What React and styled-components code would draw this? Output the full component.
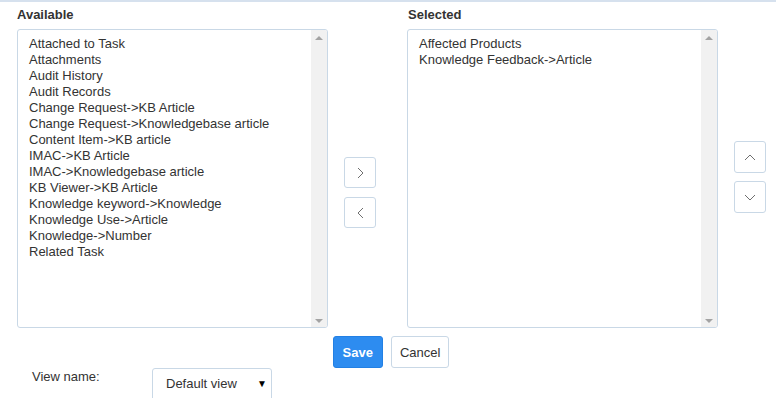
import React from 'react'
import styled, { createGlobalStyle } from 'styled-components'

const GlobalStyle = createGlobalStyle`
  html, body {
    margin: 0;
    padding: 0;
    background: #fff;
  }
  body {
    font-family: "Liberation Sans", Arial, sans-serif;
    font-size: 13px;
    color: #333;
  }
`

const Page = styled.div`
  width: 776px;
  height: 398px;
  overflow: hidden;
  border-top: 2px solid #d6e1ee;
  box-sizing: border-box;
`

const Picker = styled.div`
  display: grid;
  grid-template-columns: 311px 79px 311px 58px;
  padding: 5px 0 0 17px;
`

const Column = styled.div`
  display: flex;
  flex-direction: column;
`

const Label = styled.div`
  font-weight: bold;
  line-height: 16px;
  margin: 0 0 6px ${p => (p.inset ? 1 : 0)}px;
`

const ListBox = styled.div`
  height: 299px;
  box-sizing: border-box;
  border: 1px solid #c9d8e6;
  border-radius: 3px;
  display: flex;
  overflow: hidden;
`

const Items = styled.div`
  flex: 1;
  padding: 6px 0 0 11px;
`

const Item = styled.div`
  line-height: 16px;
  white-space: nowrap;
`

const ScrollTrack = styled.div`
  width: 16px;
  background: #f1f1f1;
  display: flex;
  flex-direction: column;
  justify-content: space-between;
  align-items: center;
  padding: 6px 0 4px;
`

const Arrow = styled.span`
  width: 0;
  height: 0;
  border-left: 4px solid transparent;
  border-right: 4px solid transparent;
  ${p => (p.down ? 'border-top: 4px solid #a3a3a3;' : 'border-bottom: 4px solid #a3a3a3;')}
`

const ButtonStack = styled.div`
  display: flex;
  flex-direction: column;
  gap: ${p => p.gap}px;
  padding: ${p => p.top}px 0 0 16px;
`

const IconButton = styled.button`
  width: 32px;
  height: ${p => p.h}px;
  box-sizing: border-box;
  padding: 0;
  background: #fff;
  border: 1px solid #c9d8e6;
  border-radius: 3px;
  display: flex;
  align-items: center;
  justify-content: center;
  svg {
    display: block;
  }
`

const Actions = styled.div`
  display: flex;
  justify-content: center;
  gap: 8px;
  padding: 8px 0 0 6px;
`

const Button = styled.button`
  height: 32px;
  box-sizing: border-box;
  padding: 0 ${p => (p.primary ? 9 : 8)}px;
  font-family: "Liberation Sans", Arial, sans-serif;
  font-size: 13px;
  font-weight: ${p => (p.primary ? 'bold' : 'normal')};
  color: ${p => (p.primary ? '#fff' : '#333')};
  background: ${p => (p.primary ? '#2d8cf0' : '#fff')};
  border: 1px solid ${p => (p.primary ? '#2280e4' : '#c9d8e6')};
  border-radius: 3px;
`

const ViewRow = styled.div`
  display: flex;
  align-items: flex-start;
  padding-left: 32px;
`

const ViewLabel = styled.div`
  width: 120px;
  line-height: 16px;
  padding-top: 1px;
`

const Select = styled.div`
  width: 120px;
  height: 34px;
  box-sizing: border-box;
  border: 1px solid #c9d8e6;
  border-radius: 3px;
  display: flex;
  justify-content: space-between;
  padding: 7px 4px 0 13px;
  line-height: 16px;
`

const Caret = styled.span`
  font-size: 10px;
  color: #000;
`

const available = [
  'Attached to Task',
  'Attachments',
  'Audit History',
  'Audit Records',
  'Change Request->KB Article',
  'Change Request->Knowledgebase article',
  'Content Item->KB article',
  'IMAC->KB Article',
  'IMAC->Knowledgebase article',
  'KB Viewer->KB Article',
  'Knowledge keyword->Knowledge',
  'Knowledge Use->Article',
  'Knowledge->Number',
  'Related Task',
]

const selected = ['Affected Products', 'Knowledge Feedback->Article']

const Chevron = ({ dir }) => {
  const pts = {
    right: '1,1 6,6 1,11',
    left: '6,1 1,6 6,11',
    up: '1,6 6,1 11,6',
    down: '1,1 6,6 11,1',
  }[dir]
  const horiz = dir === 'up' || dir === 'down'
  return (
    <svg width={horiz ? 12 : 7} height={horiz ? 7 : 12} viewBox={horiz ? '0 0 12 7' : '0 0 7 12'}>
      <polyline points={pts} fill="none" stroke="#6f6f6f" strokeWidth="1" />
    </svg>
  )
}

const List = ({ title, items, inset }) => (
  <Column>
    <Label inset={inset}>{title}</Label>
    <ListBox>
      <Items>
        {items.map(item => (
          <Item key={item}>{item}</Item>
        ))}
      </Items>
      <ScrollTrack>
        <Arrow />
        <Arrow down />
      </ScrollTrack>
    </ListBox>
  </Column>
)

export default function App() {
  return (
    <Page>
      <GlobalStyle />
      <Picker>
        <List title="Available" items={available} />
        <ButtonStack top={150} gap={9}>
          <IconButton h={31}><Chevron dir="right" /></IconButton>
          <IconButton h={31}><Chevron dir="left" /></IconButton>
        </ButtonStack>
        <List title="Selected" items={selected} inset />
        <ButtonStack top={134} gap={8}>
          <IconButton h={32}><Chevron dir="up" /></IconButton>
          <IconButton h={32}><Chevron dir="down" /></IconButton>
        </ButtonStack>
      </Picker>
      <Actions>
        <Button primary>Save</Button>
        <Button>Cancel</Button>
      </Actions>
      <ViewRow>
        <ViewLabel>View name:</ViewLabel>
        <Select>
          Default view
          <Caret>▼</Caret>
        </Select>
      </ViewRow>
    </Page>
  )
}
